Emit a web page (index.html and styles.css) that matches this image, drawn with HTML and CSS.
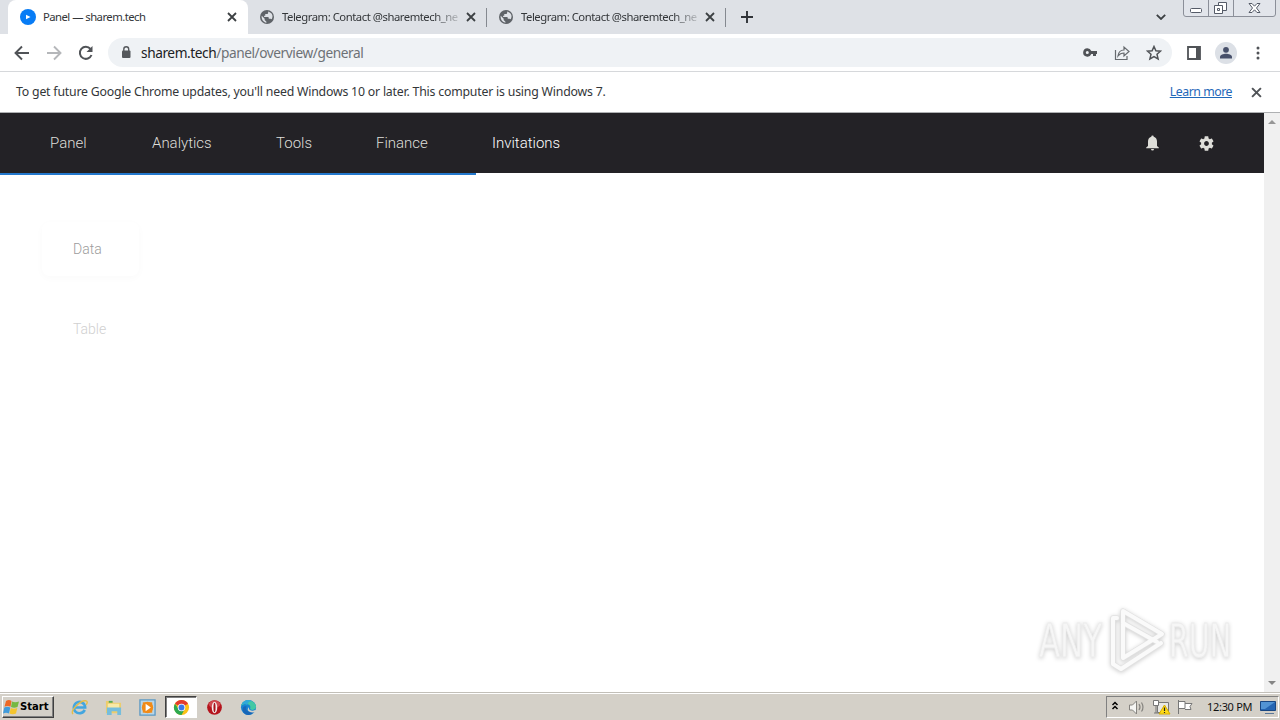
FILE: index.html
```html
<!DOCTYPE html>
<html lang="en">
<head>
<meta charset="utf-8">
<title>Panel — sharem.tech</title>
<link rel="stylesheet" href="styles.css">
</head>
<body>
<svg class="defs" width="0" height="0">
  <symbol id="globe" viewBox="0 0 24 24"><circle cx="12" cy="12" r="12" fill="#5f6368"/><path d="M3 10l5 5v2l3 3v2C5 21 2 15 3 10zM14 2.500v2c0 1.500-1 2.500-2.500 2.500H9v3H7v2h6c1.500 0 2 1 2 2v1h3l2 1c3-5 2-11-6-13.500z" fill="#dee1e6"/></symbol>
  <symbol id="close" viewBox="0 0 10 10"><path d="M1 1l8 8M9 1L1 9" fill="none" stroke="currentColor" stroke-width="1.8"/></symbol>
</svg>
<header class="tabs">
  <div class="tab active">
    <svg class="fav" viewBox="0 0 16 16"><circle cx="8" cy="8" r="8" fill="#087cf5"/><path d="M6 5.800l4.500 2.200L6 10.200z" fill="#fff"/></svg>
    <span class="title first">Panel — sharem.tech</span>
    <svg class="x"><use href="#close"/></svg>
  </div>
  <div class="tab">
    <svg class="fav small"><use href="#globe"/></svg>
    <span class="title fade">Telegram: Contact @sharemtech_ne</span>
    <svg class="x"><use href="#close"/></svg>
  </div>
  <div class="tab">
    <svg class="fav small"><use href="#globe"/></svg>
    <span class="title fade">Telegram: Contact @sharemtech_ne</span>
    <svg class="x"><use href="#close"/></svg>
  </div>
  <svg class="plus" viewBox="0 0 12 12"><path d="M6 0v12M0 6h12" stroke="#303338" stroke-width="1.9"/></svg>
  <svg class="chev" viewBox="0 0 10 6"><path d="M.8.8L5 5 9.200.8" fill="none" stroke="#3c4043" stroke-width="1.8"/></svg>
  <svg class="winbtns" viewBox="0 0 93 17"><path d="M.5 0v14q0 2.500 2.500 2.500h87q2.500 0 2.500-2.500V0M25.500 0v16M50.500 0v16" fill="#e2e5eb" stroke="#8b8f99"/><rect x="7.500" y="8.500" width="11" height="4" rx="1" fill="#fff" stroke="#555b68"/><path d="M35.500 2.500h8v8h-8z" fill="#fff" stroke="#555b68"/><path d="M31.500 5.500h8v8h-8z" fill="#fff" stroke="#555b68"/><path d="M34.500 8.500h2v2h-2z" fill="none" stroke="#555b68"/><path d="M66 3.500h3l2.500 2.700L74 3.500h3L73.500 8l3.500 4.500h-3l-2.500-2.700L69 12.500h-3L69.500 8z" fill="#fff" stroke="#555b68"/></svg>
</header>
<div class="toolbar">
  <svg class="tb back" viewBox="0 0 16 16"><path d="M15 8H2M8 1.500L1.500 8 8 14.500" fill="none" stroke="#505357" stroke-width="1.9"/></svg>
  <svg class="tb fwd" viewBox="0 0 16 16"><path d="M1 8h13M8 1.500L14.500 8 8 14.500" fill="none" stroke="#b5b7ba" stroke-width="1.9"/></svg>
  <svg class="tb reload" viewBox="0 0 16 16"><path d="M13.500 10A6 6 0 1 1 12.500 4" fill="none" stroke="#505357" stroke-width="2"/><path d="M14.500 1v6h-6z" fill="#505357"/></svg>
  <div class="omni">
    <svg class="lock" viewBox="0 0 10 13"><rect x="1" y="4.500" width="8.500" height="7.500" rx="1" fill="#55585c"/><path d="M2.800 5V3.200a2.450 2.450 0 0 1 4.900 0V5" fill="none" stroke="#55585c" stroke-width="1.400"/></svg>
    <span class="url"><b>sharem.tech</b>/panel/overview/general</span>
    <svg class="key" viewBox="0 0 15 9"><path fill-rule="evenodd" d="M4.300.3a4.200 4.200 0 0 1 4 2.700H14v3h-1v2H10V6H8.300a4.200 4.200 0 1 1-4-5.700zM4.300 3a1.500 1.500 0 1 0 0 3 1.500 1.500 0 0 0 0-3z" fill="#505357"/></svg>
    <svg class="share" viewBox="0 0 16 16"><path d="M1.500 5v9.500H13V11" fill="none" stroke="#666a6e" stroke-width="1.200"/><path d="M4 11c.5-4 2.500-6 6-6V2l5 4.500-5 4.500V8C7.500 8 5.500 9 4 11z" fill="none" stroke="#666a6e" stroke-width="1.200"/></svg>
    <svg class="star" viewBox="0 0 16 16"><path d="M8 1.500l1.900 4.300 4.600.4-3.500 3.100 1.100 4.600L8 11.500l-4.100 2.400L5 9.300 1.500 6.200l4.600-.4z" fill="none" stroke="#505357" stroke-width="1.500"/></svg>
  </div>
  <svg class="side" viewBox="0 0 14 14"><path d="M1 1h12v12H1z" fill="#fff" stroke="#505357" stroke-width="1.800"/><path d="M9 1h4v12H9z" fill="#505357"/></svg>
  <svg class="avatar" viewBox="0 0 22 22"><circle cx="11" cy="11" r="11" fill="#dce0e6"/><circle cx="11" cy="7.800" r="2.900" fill="#47506a"/><path d="M5 16.500v-1.600c0-2 3.500-3.100 6-3.100s6 1.100 6 3.100v1.600z" fill="#47506a"/></svg>
  <svg class="dots" viewBox="0 0 4 14"><circle cx="2" cy="2" r="1.500"/><circle cx="2" cy="7" r="1.500"/><circle cx="2" cy="12" r="1.500"/></svg>
</div>
<div class="info">
  <span class="msg">To get future Google Chrome updates, you'll need Windows 10 or later. This computer is using Windows 7.</span>
  <a class="learn">Learn more</a>
  <svg class="x big" viewBox="0 0 10 10"><use href="#close"/></svg>
</div>
<main class="view">
  <div class="page">
    <nav class="nav">
      <span class="n1">Panel</span><span class="n2">Analytics</span><span class="n3">Tools</span><span class="n4">Finance</span><span class="n5">Invitations</span>
      <svg class="bell" viewBox="0 0 13 16"><path d="M6.500.5a1.200 1.200 0 0 1 1.200 1.300C10 2.500 11 4.300 11 6.500V11l1.800 1.500v.8H.2v-.8L2 11V6.500c0-2.200 1-4 3.300-4.700A1.200 1.200 0 0 1 6.500.5zM5 14h3a1.500 1.500 0 0 1-3 0z" fill="#deded9"/></svg>
      <svg class="gear" viewBox="2 2 20 20"><path d="M19.140 12.940c.04-.3.060-.61.060-.94 0-.32-.02-.64-.07-.94l2.030-1.580c.18-.14.230-.41.120-.61l-1.920-3.320c-.12-.22-.37-.29-.59-.22l-2.390.96c-.5-.38-1.030-.7-1.620-.94l-.36-2.540c-.04-.24-.24-.41-.48-.41h-3.840c-.24 0-.43.170-.47.410l-.36 2.540c-.59.240-1.130.57-1.620.94l-2.390-.96c-.22-.08-.47 0-.59.220L2.740 8.870c-.12.210-.08.470.12.610l2.030 1.580c-.05.300-.09.630-.09.940s.02.640.07.940l-2.030 1.580c-.18.140-.23.410-.12.610l1.920 3.320c.12.220.37.290.59.220l2.390-.96c.5.380 1.030.7 1.620.94l.36 2.540c.05.240.24.410.48.410h3.840c.24 0 .44-.17.470-.41l.36-2.540c.59-.24 1.130-.56 1.620-.94l2.390.96c.22.080.47 0 .59-.22l1.920-3.320c.12-.22.070-.47-.12-.61l-2.010-1.580zM12 15.200c-1.760 0-3.200-1.440-3.200-3.200s1.440-3.200 3.200-3.200 3.200 1.440 3.200 3.200-1.440 3.200-3.200 3.200z" fill="#deded9"/></svg>
    </nav>
    <div class="progress"></div>
    <aside class="menu"><div class="item on">Data</div><div class="item">Table</div></aside>
    <svg class="mark" viewBox="0 0 210 80">
      <g class="letters"><text x="12" y="58" textLength="63" lengthAdjust="spacingAndGlyphs">ANY</text><text x="142" y="58" textLength="62" lengthAdjust="spacingAndGlyphs">RUN</text></g>
      <g class="logo"><path class="edge" d="M96 12L135 35 96 59zM86 19V65l8 5 40-26M86 19h4M96 24L130 43"/><path class="core" d="M96 12L135 35 96 59zM86 19V65l8 5 40-26M86 19h4M96 24L130 43"/></g>
    </svg>
  </div>
  <div class="scroll"><i class="up"></i><i class="down"></i></div>
</main>
<footer class="taskbar">
  <div class="start"><svg viewBox="0 0 16 16"><path d="M3 2q3-2 5.500 0L7.500 7.800q-3-1.500-6 0z" fill="#ed6826"/><path d="M9 2.500q3 1.500 7 0L14.500 8Q11 9.500 8 8z" fill="#76b843"/><path d="M1.300 8.500q3-1.500 6 0L6 14.500q-3-1.500-6 0z" fill="#419bdb"/><path d="M7.800 9q3 1.500 6.500 0L13 14.500q-3.500 1.500-6.500 0z" fill="#f4c52f"/></svg>Start</div>
  <div class="slot ie"><svg viewBox="0 0 18 18"><path d="M14.500 11.500A6 6 0 1 1 15 9H4" fill="none" stroke="#43a6df" stroke-width="2.800"/><path d="M2 16C-1 12 10 1 16 2c2 .5 1 3 0 4" fill="none" stroke="#e5bd48" stroke-width="1.500"/></svg></div>
  <div class="slot"><svg viewBox="0 0 18 18"><path d="M1 2h7l1 2h8v11H1z" fill="#edcd6c"/><path d="M3 5h12v5H3z" fill="#f8e9a7"/><path d="M2 9h15v8h-4v-4H7v4H2z" fill="#75bddd"/><path d="M4 3h4" stroke="#58aa55" stroke-width="2"/></svg></div>
  <div class="slot"><svg viewBox="0 0 18 18"><path d="M1 1h16v16H1z" fill="#b9d6e8" stroke="#5c99c4" stroke-width="1.400"/><path d="M4 3.500h10v11H4z" fill="#f18b18"/><circle cx="9" cy="9" r="6" fill="#f18b18"/><path d="M7 5L12.500 9 7 13z" fill="#fff"/></svg></div>
  <div class="slot pressed"><svg viewBox="0 0 18 18"><circle cx="9" cy="9" r="8" fill="#fbc116"/><path d="M9 9L2.070 5A8 8 0 0 1 15.930 5z" fill="#e33b2e"/><path d="M2.070 5A8 8 0 0 0 9 17L12.500 10.500H6z" fill="#2da94f"/><circle cx="9" cy="9" r="4" fill="#fff"/><circle cx="9" cy="9" r="3.100" fill="#3b78e7"/></svg></div>
  <div class="slot late"><svg viewBox="0 0 18 18"><circle cx="9" cy="9" r="7.800" fill="#b5141d"/><ellipse cx="9" cy="5.500" rx="6" ry="3.800" fill="#d04a50"/><ellipse cx="9" cy="9" rx="2.900" ry="6" fill="#f6eeee"/><ellipse cx="9" cy="9" rx="1.100" ry="5" fill="#a8141c"/></svg></div>
  <div class="slot"><svg viewBox="0 0 18 18"><circle cx="9" cy="9" r="8" fill="#1684d2"/><path d="M1.200 7C3-1 16 0 17 8c0 3-3 4-5 3.500-2-.5-1-2-1-3C11 5 5 4 1.200 7z" fill="#43c8a4"/><path d="M1.200 7C3 1 9 0 12 2 8 3 9 5 7 6 5 5 3 5 1.200 7z" fill="#2fa9d8"/><path d="M7 8c-2 4 2 7 8 5.500C12 18 5 18 3 13 2 9 4 7 7 8z" fill="#1866b8"/><path d="M9.500 8.500c-1 3 3 5 6.500 3.200l1.500.8-2 1.500C10 15 6 12 9.500 8.500z" fill="#d4d0c8"/></svg></div>
  <div class="tray">
    <svg class="traypic" viewBox="0 0 94 20"><path d="M5.500 8L8 5.500 10.500 8M5.500 12L8 9.500 10.500 12" fill="none" stroke="#000" stroke-width="1.500"/><path d="M22.500 8h3l4-4v13l-4-4h-3z" fill="#f5f5f3" stroke="#85837f"/><path d="M32 7q2 3 0 6M34.500 5.500q3 5 0 9" fill="none" stroke="#85837f" stroke-width="1.200"/><path d="M50.500 5.500h11v10h-11z" fill="#e8e8e5" stroke="#777"/><path d="M46.500 3.500h5v5h-5zM49 8v8M47 16h5" fill="#fff" stroke="#777"/><path d="M57.500 8L63 17H52z" fill="#ffdb16" stroke="#d6ac00"/><path d="M57.500 10.500v3.500M57.500 15v1" stroke="#222" stroke-width="1.200"/><path d="M71.500 3v14M72 4.500h6v7h-6M78 6.500h7l-2 3 1 3h-6" fill="#fff" stroke="#777"/></svg>
    <span class="clock">12:30 PM</span>
    <svg class="monitor" viewBox="0 0 17 15"><path d="M.5 1.500h15v9h-15z" fill="#2565b2" stroke="#194782"/><path d="M1 2h14L5 9H1z" fill="#5294d4"/><path d="M5 13.500h9" stroke="#5b7899"/></svg>
  </div>
</footer>
</body>
</html>
```
FILE: styles.css
```css
*{box-sizing:border-box}
body{margin:0;width:1280px;height:720px;overflow:hidden;display:flex;flex-direction:column;background:#fff;font-family:"Noto Sans","Open Sans",sans-serif;color:#333639}
svg{display:block;flex:none}
.defs{position:absolute}
.tabs{height:34px;flex:none;background:#dee1e6;display:flex;padding-left:8px}
.tab{width:239px;height:34px;display:flex;align-items:center;padding-left:12px}
.tab:not(.active){background:linear-gradient(#858990,#858990) right 8px/1px 19px no-repeat}
.tab.active{width:240px;background:#fff;border-radius:8px 8px 0 0}
.fav{width:16px;height:16px;margin-right:7px}
.fav.small{width:14px;height:14px;margin-right:8px}
.title{width:180px;white-space:nowrap;font-size:11.300px;line-height:16px;letter-spacing:-.47px}
.first{width:185px;letter-spacing:-.54px}
.title.fade{-webkit-mask-image:linear-gradient(90deg,#000 152px,transparent 182px);mask-image:linear-gradient(90deg,#000 152px,transparent 182px)}
.x{width:10px;height:10px;color:#3c4043}
.tab:not(.active) .x{margin-left:4px}
.active .x{margin-left:-1px}
.plus{width:12px;height:12px;margin:11px 0 0 15px}
.chev{width:10px;height:6px;margin:14px 0 0 auto}
.winbtns{width:93px;height:17px;margin:0 4px 0 17px}
.toolbar{height:38px;flex:none;border-bottom:1px solid #d6d8db;display:flex;align-items:center;padding-left:14px}
.tb{width:16px;height:16px;margin-right:16px}
.reload{margin-right:14px}
.omni{width:1064px;height:29px;border-radius:15px;background:#eff2f5;display:flex;align-items:center;padding-left:13px}
.lock{width:10px;height:13px;margin-right:10px}
.url{width:942px;font-size:13.700px;line-height:20px;color:#6d7176;white-space:nowrap;letter-spacing:-.43px}
.url b{font-weight:400;color:#202124}
.key{width:15px;height:9px;margin-right:16px}
.share{width:16px;height:16px;margin-right:16px}
.star{width:16px;height:16px}
.side{width:14px;height:14px;margin-left:15px}
.avatar{width:22px;height:22px;margin-left:14px}
.dots{width:4px;height:14px;margin-left:19px;fill:#505357}
.info{height:41px;flex:none;display:flex;align-items:center;padding:0 19px 2px 16px;border-bottom:1px solid #aeb0b2;font-size:12.300px}
.msg{white-space:nowrap;letter-spacing:-.2px}
.learn{margin-left:auto;color:#1f68b9;text-decoration:underline;white-space:nowrap;letter-spacing:-.46px}
.big{width:11px;height:11px;margin:0 -1px 0 19px;color:#505357;position:relative;top:1px}
.view{height:579px;flex:none;display:flex}
.page{width:1264px;position:relative}
.nav{height:60px;background:#232226;display:flex;align-items:center;padding-left:50px;color:#deded9;font:300 15px/20px Roboto,sans-serif}
.n1{width:102px}.n2{width:124px}.n3{width:100px}.n4{width:116px}
.n5{color:#fff}
.bell{width:13px;height:16px;margin-left:auto}
.gear{width:15px;height:15px;margin:0 50px 0 40px}
.progress{width:476px;height:2px;background:#2378cc}
.menu{padding:47px 0 0 42px;font:300 14px/54px Roboto,sans-serif;color:#d0d0d0}
.item{width:97px;height:54px;padding-left:31px;margin-bottom:26px}
.on{color:#9c9c9c;border-radius:8px;box-shadow:0 2px 8px rgba(0,0,0,.025)}
.mark{position:absolute;left:1027px;top:486px;width:210px;height:80px;filter:drop-shadow(0 1px 2px rgba(0,0,0,.2))}
.letters{font:400 47px "DejaVu Sans Condensed","Liberation Sans",sans-serif;fill:#f6f6f6;stroke:#ececec;stroke-width:.8}
.logo path{fill:none;stroke-linejoin:round;stroke-linecap:round}
.logo .edge{stroke:#e2e2e2;stroke-width:5.500}
.logo .core{stroke:#fafafa;stroke-width:4}
.scroll{width:16px;background:#f0f0f0;display:flex;flex-direction:column;justify-content:space-between;align-items:center;padding:7px 0 7px}
.scroll i{border:4px solid transparent}
.up{border-top:0!important;border-bottom-color:#969696!important}
.down{border-bottom:0!important;border-top-color:#858585!important}
.taskbar{height:28px;flex:none;background:#d4d0c8;border-top:1px solid #c2bfb8;box-shadow:inset 0 1px #fff;display:flex;padding-top:3px}
.start{width:52px;height:22px;margin:0 8px 0 2px;border:1px solid;border-color:#fff #404040 #404040 #fff;box-shadow:inset -1px -1px #808080;display:flex;align-items:center;font:700 11.200px/20px "DejaVu Sans Condensed",sans-serif;color:#000}
.start svg{width:16px;height:16px;margin-right:1px}
.slot{width:32px;height:22px;margin-right:2px;display:flex;align-items:center;justify-content:center}
.slot svg{width:17px;height:17px}
.ie{margin-left:1px}
.late{margin-left:-1px}
.pressed{background:#fff;border:1px solid;border-color:#404040 #fff #fff #404040;box-shadow:inset 1px 1px #808080}
.tray{width:173px;height:22px;margin:0 1px 0 auto;border:1px solid;border-color:#808080 #fff #fff #808080;display:flex;align-items:center;color:#111;font-size:11px;line-height:20px}
.traypic{width:94px;height:20px}
.clock{width:54px;white-space:nowrap;margin-left:6px;margin-right:-1px;letter-spacing:-.3px}
.monitor{width:17px;height:15px}
```
